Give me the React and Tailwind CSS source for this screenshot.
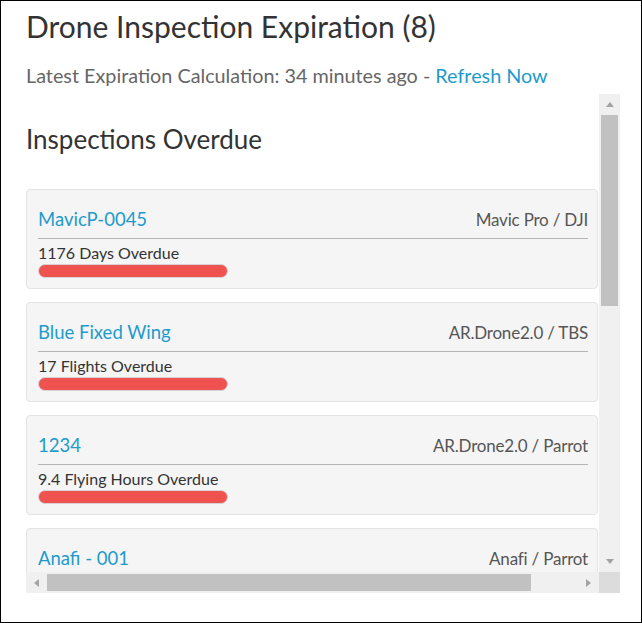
import React from "react";

const items = [
  { name: "MavicP-0045", model: "Mavic Pro / DJI", status: "1176 Days Overdue" },
  { name: "Blue Fixed Wing", model: "AR.Drone2.0 / TBS", status: "17 Flights Overdue" },
  { name: "1234", model: "AR.Drone2.0 / Parrot", status: "9.4 Flying Hours Overdue" },
  { name: "Anafi - 001", model: "Anafi / Parrot", status: "" },
];

function Card({ item }) {
  return (
    <div className="h-[100px] shrink-0 rounded-[4px] border border-[#e3e3e3] bg-[#f5f5f5] pl-[11px] pr-[9px] pt-[17px] mb-[13px]">
      <div className="flex items-baseline justify-between border-b border-[#b5b5b5] pb-[6px] leading-[24px]">
        <span className="text-[18.5px] text-[#1e9bcb]">{item.name}</span>
        <span className="text-[17px] text-[#555] tracking-[-0.2px]">{item.model}</span>
      </div>
      {item.status && (
        <>
          <div className="mt-[4px] text-[16px] leading-[20px] text-[#333]">{item.status}</div>
          <div className="mt-[1px] h-[14px] w-[190px] rounded-full border border-[#d4d4d4] bg-[#f05250]" />
        </>
      )}
    </div>
  );
}

function Tri({ dir }) {
  const pts = {
    up: "0,5 4,0 8,5",
    down: "0,0 8,0 4,5",
    left: "5,0 5,8 0,4",
    right: "0,0 0,8 5,4",
  }[dir];
  const vert = dir === "up" || dir === "down";
  return (
    <svg width={vert ? 8 : 5} height={vert ? 5 : 8} viewBox={vert ? "0 0 8 5" : "0 0 5 8"}>
      <polygon points={pts} fill="#a3a3a3" />
    </svg>
  );
}

export default function App() {
  return (
    <div
      className="w-[642px] h-[623px] border border-black bg-white overflow-hidden"
      style={{ fontFamily: "Lato, 'Open Sans', sans-serif" }}
    >
      <div className="pl-[25px] pt-[7px]">
        <h1 className="text-[30px] leading-[36px] text-[#333]">Drone Inspection Expiration (8)</h1>
        <p className="mt-[20px] text-[19.8px] leading-[22px] text-[#666]">
          Latest Expiration Calculation: 34 minutes ago -{" "}
          <span className="text-[#1e9bcb]">Refresh Now</span>
        </p>
      </div>
      <div className="ml-[25px] mt-[8px] w-[594px] h-[499px] flex flex-col">
        <div className="flex h-[478px]">
          <div className="flex-1 overflow-hidden pr-[1px]">
            <h2 className="pt-[28px] text-[26px] leading-[34px] text-[#333]">Inspections Overdue</h2>
            <div className="mt-[33px] flex flex-col">
              {items.map((it) => (
                <Card key={it.name} item={it} />
              ))}
            </div>
          </div>
          <div className="w-[21px] bg-[#f0f0f0] flex flex-col">
            <div className="h-[21px] flex items-center justify-center">
              <Tri dir="up" />
            </div>
            <div className="flex-1 px-[2px]">
              <div className="h-[191px] bg-[#c1c1c1]" />
            </div>
            <div className="h-[21px] flex items-center justify-center">
              <Tri dir="down" />
            </div>
          </div>
        </div>
        <div className="flex h-[21px]">
          <div className="flex-1 bg-[#f0f0f0] flex items-center">
            <div className="w-[21px] h-full flex items-center justify-center">
              <Tri dir="left" />
            </div>
            <div className="flex-1 h-full py-[2px]">
              <div className="h-full w-[484px] bg-[#c1c1c1]" />
            </div>
            <div className="w-[21px] h-full flex items-center justify-center">
              <Tri dir="right" />
            </div>
          </div>
          <div className="w-[21px] bg-[#dcdcdc]" />
        </div>
      </div>
    </div>
  );
}
